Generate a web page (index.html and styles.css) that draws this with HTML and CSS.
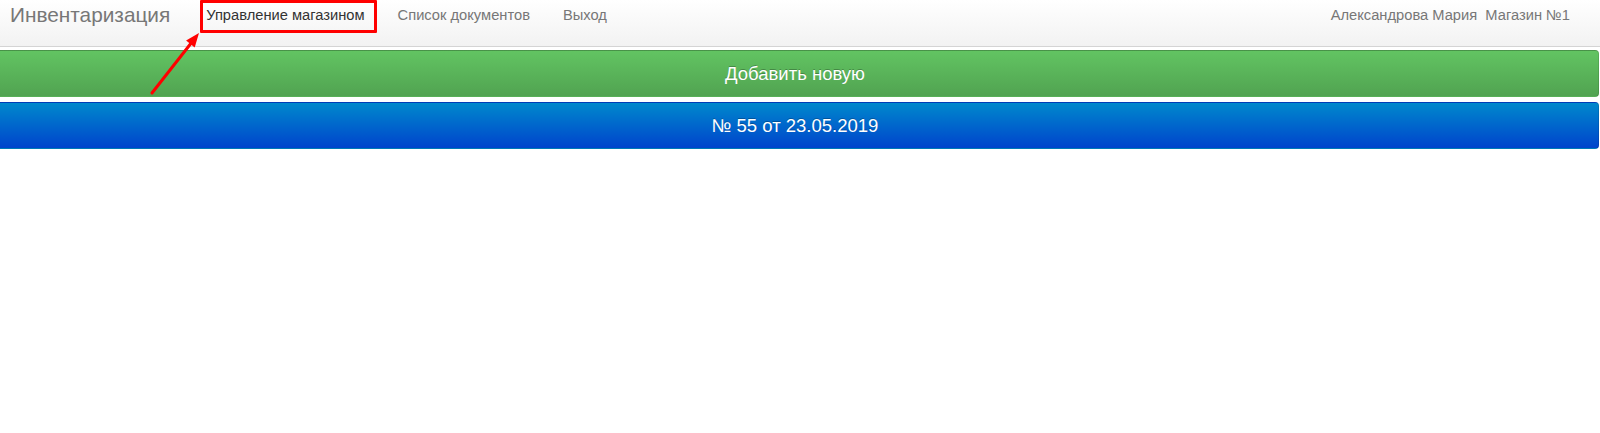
FILE: index.html
```html
<!DOCTYPE html>
<html lang="ru">
<head>
    <meta charset="UTF-8">
    <title>Инвентаризация</title>
    <link rel="stylesheet" href="styles.css">
</head>
<body>
    <nav class="navbar">
        <a class="brand" href="#">Инвентаризация</a>
        <ul class="nav">
            <li><a class="active" href="#">Управление магазином</a></li>
            <li><a href="#">Список документов</a></li>
            <li><a href="#">Выход</a></li>
        </ul>
        <div class="user">Александрова Мария&nbsp; Магазин №1</div>
    </nav>

    <div class="actions">
        <button class="btn btn-success">Добавить новую</button>
        <button class="btn btn-primary">№ 55 от 23.05.2019</button>
    </div>

    <div class="mark-box"></div>
    <svg class="mark-arrow" width="70" height="80" viewBox="0 0 70 80">
        <line x1="5" y1="65" x2="45" y2="14" stroke="#f00" stroke-width="3" stroke-linecap="round"/>
        <polygon points="52,5 47.7,19.4 39.1,12.6" fill="#f00"/>
    </svg>
</body>
</html>
```

FILE: styles.css
```css
body {
    margin: 0;
    font-family: "Liberation Sans", Arial, sans-serif;
    background: #fff;
}
.navbar {
    display: flex;
    align-items: flex-start;
    height: 46px;
    background: linear-gradient(#fff, #f2f2f2);
    border-bottom: 1px solid #d4d4d4;
}
.brand {
    padding: 3px 0 0 10px;
    font-size: 20.8px;
    line-height: 24px;
    color: #777;
    text-decoration: none;
}
.nav {
    display: flex;
    list-style: none;
    margin: 0 0 0 19px;
    padding: 0;
}
.nav a {
    display: block;
    padding: 6px 16px 0 17px;
    font-size: 14.7px;
    line-height: 18px;
    color: #777;
    text-decoration: none;
}
.nav a.active {
    color: #333;
}
.user {
    margin-left: auto;
    padding: 6px 30px 0 0;
    font-size: 14.7px;
    line-height: 18px;
    color: #777;
}
.actions {
    display: flex;
    flex-direction: column;
    gap: 5px;
    margin-left: -9px;
    padding: 3px 1px 0 0;
}
.btn {
    display: block;
    width: 100%;
    height: 47px;
    border: 1px solid rgba(0,0,0,0.1);
    border-radius: 4px;
    font-family: inherit;
    font-size: 18.5px;
    color: #fff;
    text-shadow: 0 -1px 0 rgba(0,0,0,0.25);
    cursor: pointer;
}
.btn-success {
    background: linear-gradient(#62c462, #51a351);
}
.btn-primary {
    background: linear-gradient(#0088cc, #0044cc);
}
.mark-box {
    position: absolute;
    left: 200px;
    top: 0;
    width: 171px;
    height: 27px;
    border: 3px solid #f00;
    border-radius: 1px;
}
.mark-arrow {
    position: absolute;
    left: 147px;
    top: 28px;
}
```
